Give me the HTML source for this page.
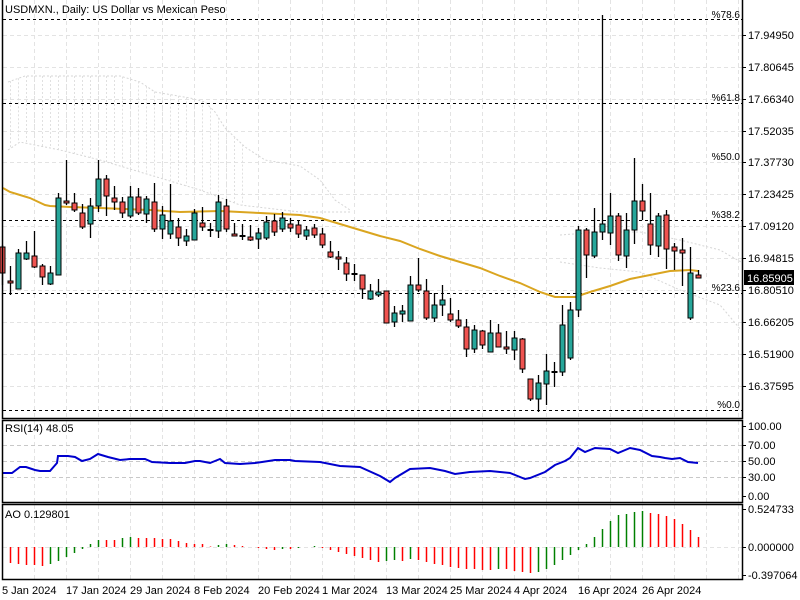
<!DOCTYPE html>
<html><head><meta charset="utf-8"><style>
html,body{margin:0;padding:0;background:#fff;width:800px;height:600px;overflow:hidden}
svg{display:block}
text{font-family:"Liberation Sans",sans-serif;font-size:11px;fill:#000}
.f{font-size:10px}
</style></head><body>
<svg id="s" width="800" height="600" xmlns="http://www.w3.org/2000/svg">
<g id="grid" stroke="#e3e3e3" stroke-dasharray="4,3" stroke-width="1"></g>
<g id="cloud" stroke="#d6d6d6" stroke-dasharray="2,2" fill="none" stroke-width="1"></g>
<g stroke="#000" stroke-dasharray="3,3" stroke-width="1">
<line x1="3" y1="19.5" x2="742" y2="19.5"/>
<line x1="3" y1="103.5" x2="742" y2="103.5"/>
<line x1="3" y1="220.5" x2="742" y2="220.5"/>
<line x1="3" y1="293.5" x2="742" y2="293.5"/>
<line x1="3" y1="410.5" x2="742" y2="410.5"/>
</g>
<polyline id="ma" fill="none" stroke="#daa520" stroke-width="2"/>
<g id="candles"></g>
<polyline id="rsi" fill="none" stroke="#0000cd" stroke-width="2"/>
<g id="ao"></g>
<g fill="none" stroke="#000" stroke-width="1.5">
<path d="M2.5,0 V418.5 H742.5 V0"/>
<rect x="2.5" y="420.5" width="740" height="82"/>
<rect x="2.5" y="504.5" width="740" height="75"/>
</g>
<g id="ticks" stroke="#000" stroke-width="1"></g>
<text x="5" y="13">USDMXN., Daily:  US Dollar vs Mexican Peso</text>
<g class="f" text-anchor="end">
<text class="f" x="740" y="18">%78.6</text>
<text class="f" x="740" y="101">%61.8</text>
<text class="f" x="740" y="160">%50.0</text>
<text class="f" x="740" y="218">%38.2</text>
<text class="f" x="740" y="291">%23.6</text>
<text class="f" x="740" y="408">%0.0</text>
</g>
<text x="748" y="39">17.94950</text>
<text x="748" y="71">17.80645</text>
<text x="748" y="103">17.66340</text>
<text x="748" y="135">17.52035</text>
<text x="748" y="166">17.37730</text>
<text x="748" y="198">17.23425</text>
<text x="748" y="230">17.09120</text>
<text x="748" y="262">16.94815</text>
<text x="748" y="294">16.80510</text>
<text x="748" y="326">16.66205</text>
<text x="748" y="358">16.51900</text>
<text x="748" y="390">16.37595</text>
<rect x="744" y="270" width="50" height="15" fill="#000"/>
<text x="747" y="282" style="fill:#fff">16.85905</text>
<text x="5" y="432">RSI(14) 48.05</text>
<text x="748" y="430">100.00</text>
<text x="748" y="449">70.00</text>
<text x="748" y="465">50.00</text>
<text x="748" y="481">30.00</text>
<text x="748" y="500">0.00</text>
<text x="5" y="518">AO 0.129801</text>
<text x="748" y="513">0.524733</text>
<text x="748" y="551">0.000000</text>
<text x="748" y="579">-0.397064</text>
<text x="2" y="594">5 Jan 2024</text>
<text x="66" y="594">17 Jan 2024</text>
<text x="130" y="594">29 Jan 2024</text>
<text x="194" y="594">8 Feb 2024</text>
<text x="258" y="594">20 Feb 2024</text>
<text x="322" y="594">1 Mar 2024</text>
<text x="386" y="594">13 Mar 2024</text>
<text x="450" y="594">25 Mar 2024</text>
<text x="514" y="594">4 Apr 2024</text>
<text x="578" y="594">16 Apr 2024</text>
<text x="642" y="594">26 Apr 2024</text>
</svg>
<script>
(function(){
var NS="http://www.w3.org/2000/svg";
function el(p,t,a){var e=document.createElementNS(NS,t);for(var k in a)e.setAttribute(k,a[k]);p.appendChild(e);return e;}
function pts(a){return a.map(function(p){return p.join(',')}).join(' ');}
var G=document.getElementById('grid');
for(var x=34.5;x<742;x+=32){el(G,'line',{x1:x,y1:0,x2:x,y2:418});el(G,'line',{x1:x,y1:421,x2:x,y2:502});el(G,'line',{x1:x,y1:505,x2:x,y2:579});}
[35,67,99,131,162,194,226,258,290,322,354,386].forEach(function(y){el(G,'line',{x1:3,y1:y+.5,x2:742,y2:y+.5});});
[445,461,477].forEach(function(y){el(G,'line',{x1:3,y1:y+.5,x2:742,y2:y+.5,stroke:'#c8c8c8'});});
el(G,'line',{x1:3,y1:547.5,x2:742,y2:547.5});
var T=document.getElementById('ticks');
[35,67,99,131,162,194,226,258,290,322,354,386,426,445,461,477,496,509,547,575].forEach(function(y){el(T,'line',{x1:742,y1:y+.5,x2:746,y2:y+.5});});
var C=document.getElementById('cloud');
var tp=[[8,82],[25,76],[120,76],[140,82],[155,92],[190,98],[205,102],[215,112],[225,128],[245,147],[265,160],[300,166],[320,180],[335,200],[350,210]];
var bt=[[8,150],[20,142],[60,150],[100,160],[150,175],[200,190],[240,205],[300,212],[350,212]];
el(C,'polyline',{points:pts(tp)});
el(C,'polyline',{points:pts(bt)});
function interp(arr,x){for(var i=0;i<arr.length-1;i++){if(x>=arr[i][0]&&x<=arr[i+1][0]){var t=(x-arr[i][0])/(arr[i+1][0]-arr[i][0]);return arr[i][1]+t*(arr[i+1][1]-arr[i][1]);}}return null;}
for(var x=10.5;x<250;x+=8){var a=interp(tp,x),b=interp(bt,x);if(a!=null&&b!=null)el(C,'line',{x1:x,y1:a,x2:x,y2:b,stroke:'#e0e0e0'});}
el(C,'polyline',{points:pts([[560,235],[600,232],[640,232],[680,240],[720,250],[741,262]])});
el(C,'polyline',{points:pts([[560,262],[600,268],[640,272],[680,290],[720,305],[741,330]])});
var ma=[[3,188],[10,192],[20,195],[30,198],[45,205],[50,206],[70,207],[100,208],[150,210],[180,212],[220,211],[260,213],[280,214],[300,215],[320,218],[340,224],[360,230],[380,236],[400,241],[420,249],[440,256],[460,262],[480,268],[500,276],[520,283],[540,292],[555,297],[575,297],[590,292],[610,286],[630,279],[650,275],[670,271],[690,270],[698,271]];
document.getElementById('ma').setAttribute('points',pts(ma));
var K=[[247,273,245,285],[281,283,266,295],[289,253,249,289],[259,253,241,260],[256,267,231,268],[266,277,264,285],[284,273,266,285],[275,198,193,275],[201,203,160,205],[203,210,193,212],
[213,227,204,229],[224,206,198,238],[206,179,160,212],[179,196,175,216],[198,202,186,210],[202,213,197,218],[216,197,186,218],[197,213,188,215],[214,199,196,223],[202,229,183,232],
[229,215,206,239],[234,221,184,239],[227,238,218,246],[241,236,229,246],[240,213,209,240],[223,227,207,231],[230,230,223,237],[231,202,195,238],[206,229,199,232],[234,236,223,236],
[236,236,224,240],[237,240,225,241],[239,233,228,249],[238,222,216,240],[221,232,214,236],[229,218,212,232],[224,228,218,232],[225,234,220,238],[236,230,226,240],[228,235,224,238],
[234,245,228,248],[252,257,241,258],[257,259,251,270],[263,274,257,281],[274,274,264,281],[275,289,275,299],[299,291,284,300],[295,292,279,297],[291,323,291,323],[322,313,306,327],
[314,311,305,322],[321,285,276,321],[285,290,258,292],[291,318,279,320],[318,305,293,322],[305,300,285,316],[314,320,298,322],[320,326,310,328],[327,349,319,357],[349,330,325,353],
[331,345,330,349],[352,333,320,352],[333,347,324,347],[347,349,331,354],[350,338,331,360],[339,369,338,373],[379,399,379,401],[399,383,375,412],[384,371,354,405],[372,372,362,387],
[372,325,305,376],[358,310,302,360],[310,230,226,317],[230,255,228,278],[256,232,208,258],[232,224,15,240],[233,216,193,245],[216,255,213,261],[256,230,213,268],[230,201,158,244],
[201,211,184,220],[224,245,193,255],[246,216,213,257],[215,249,210,269],[247,251,243,270],[250,253,238,286],[318,273,247,320],[275,278,270,278]];
var CG=document.getElementById('candles');
K.forEach(function(c,i){var x=2.5+8*i;var o=c[0],cl=c[1];
el(CG,'line',{x1:x,y1:c[2],x2:x,y2:c[3],stroke:'#000','stroke-width':1.3});
var t=Math.min(o,cl),h=Math.abs(o-cl);
if(h<1.5){el(CG,'line',{x1:x-3,y1:t,x2:x+3,y2:t,stroke:'#000','stroke-width':2});}
else el(CG,'rect',{x:x-2.5,y:t,width:5,height:h,fill:cl<o?'#26a69a':'#ef5350',stroke:'#000','stroke-width':1});
});
var r=[[3,473],[12,473],[20,467],[26,467],[35,470],[40,471],[50,471],[57,463],[58,456],[68,456],[75,457],[82,461],[90,459],[98,454],[108,457],[120,460],[130,459],[145,459],[152,462],[170,463],[185,463],[195,461],[200,461],[210,463],[215,461],[220,459],[225,463],[240,464],[255,463],[262,462],[275,460],[290,460],[295,461],[320,462],[340,466],[360,467],[380,476],[390,482],[395,478],[410,469],[430,468],[445,471],[455,474],[470,472],[490,471],[510,473],[525,479],[530,478],[545,472],[555,465],[565,461],[570,458],[578,448],[585,452],[595,448],[610,449],[618,453],[630,448],[640,450],[652,456],[660,457],[665,458],[672,459],[680,458],[688,462],[698,463]];
document.getElementById('rsi').setAttribute('points',pts(r));
var v=[null,-16,-17,-18,-18,-19,-17,-14,-10,-6,-2,3,7,7,7,9,10,9,9,9,8,8,6,4,3,3,0.5,2,3,2,1,0,-1,-2,-3,-2,-2,-1,0,1,-1,
-3,-5,-7,-9,-11,-13,-15,-14,-13,-14,-12,-13,-15,-17,-18,-20,-21,-22,-22,-23,-23,-22,-22,-24,-25,-26,-25,-22,-18,-13,
-8,-3,3,10,18,26,32,33,35,36,34,33,31,28,23,17,10];
var A=document.getElementById('ao');
for(var i=1;i<v.length;i++){if(v[i]==null)continue;var x=2.5+8*i;var col=(v[i-1]!=null&&v[i]>v[i-1])?'#008000':'#ff0000';
if(Math.abs(v[i])<0.3)continue;
el(A,'line',{x1:x,y1:547,x2:x,y2:547-v[i],stroke:col,'stroke-width':1.5});}
})();
</script>
</body></html>
